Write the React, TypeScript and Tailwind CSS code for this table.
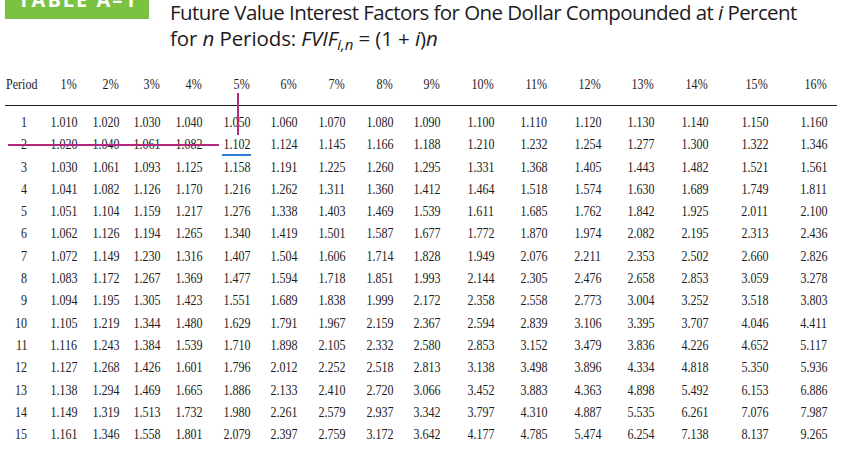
const rows: string[][] = [
  ["1.010", "1.020", "1.030", "1.040", "1.050", "1.060", "1.070", "1.080", "1.090", "1.100", "1.110", "1.120", "1.130", "1.140", "1.150", "1.160"],
  ["1.020", "1.040", "1.061", "1.082", "1.102", "1.124", "1.145", "1.166", "1.188", "1.210", "1.232", "1.254", "1.277", "1.300", "1.322", "1.346"],
  ["1.030", "1.061", "1.093", "1.125", "1.158", "1.191", "1.225", "1.260", "1.295", "1.331", "1.368", "1.405", "1.443", "1.482", "1.521", "1.561"],
  ["1.041", "1.082", "1.126", "1.170", "1.216", "1.262", "1.311", "1.360", "1.412", "1.464", "1.518", "1.574", "1.630", "1.689", "1.749", "1.811"],
  ["1.051", "1.104", "1.159", "1.217", "1.276", "1.338", "1.403", "1.469", "1.539", "1.611", "1.685", "1.762", "1.842", "1.925", "2.011", "2.100"],
  ["1.062", "1.126", "1.194", "1.265", "1.340", "1.419", "1.501", "1.587", "1.677", "1.772", "1.870", "1.974", "2.082", "2.195", "2.313", "2.436"],
  ["1.072", "1.149", "1.230", "1.316", "1.407", "1.504", "1.606", "1.714", "1.828", "1.949", "2.076", "2.211", "2.353", "2.502", "2.660", "2.826"],
  ["1.083", "1.172", "1.267", "1.369", "1.477", "1.594", "1.718", "1.851", "1.993", "2.144", "2.305", "2.476", "2.658", "2.853", "3.059", "3.278"],
  ["1.094", "1.195", "1.305", "1.423", "1.551", "1.689", "1.838", "1.999", "2.172", "2.358", "2.558", "2.773", "3.004", "3.252", "3.518", "3.803"],
  ["1.105", "1.219", "1.344", "1.480", "1.629", "1.791", "1.967", "2.159", "2.367", "2.594", "2.839", "3.106", "3.395", "3.707", "4.046", "4.411"],
  ["1.116", "1.243", "1.384", "1.539", "1.710", "1.898", "2.105", "2.332", "2.580", "2.853", "3.152", "3.479", "3.836", "4.226", "4.652", "5.117"],
  ["1.127", "1.268", "1.426", "1.601", "1.796", "2.012", "2.252", "2.518", "2.813", "3.138", "3.498", "3.896", "4.334", "4.818", "5.350", "5.936"],
  ["1.138", "1.294", "1.469", "1.665", "1.886", "2.133", "2.410", "2.720", "3.066", "3.452", "3.883", "4.363", "4.898", "5.492", "6.153", "6.886"],
  ["1.149", "1.319", "1.513", "1.732", "1.980", "2.261", "2.579", "2.937", "3.342", "3.797", "4.310", "4.887", "5.535", "6.261", "7.076", "7.987"],
  ["1.161", "1.346", "1.558", "1.801", "2.079", "2.397", "2.759", "3.172", "3.642", "4.177", "4.785", "5.474", "6.254", "7.138", "8.137", "9.265"],
];

const rates = Array.from({ length: 16 }, (_, i) => `${i + 1}%`);

// column widths measured from the right edge of each column of numbers
const gridCols =
  "grid grid-cols-[41px_36px_42px_41px_42px_48px_47px_48px_48px_47px_54px_53px_54px_53px_54px_60px_59px]";

function Num({ children }: { children: React.ReactNode }) {
  return (
    <div className="text-right">
      <span className="inline-block origin-right scale-x-[0.86]">{children}</span>
    </div>
  );
}

export default function App() {
  return (
    <div className="relative w-[856px] h-[449px] overflow-hidden bg-white text-[#1e1b1c]">
      {/* heading */}
      <div className="flex h-[74px] items-start">
        <div className="ml-[5px] w-[144px] h-[19px] shrink-0 overflow-hidden bg-[#7cc242]">
          <div className="mt-[-10.5px] pl-[13px] font-['Open_Sans',sans-serif] text-[20px] leading-none font-bold tracking-[0.1em] text-white whitespace-nowrap">
            TABLE A–1
          </div>
        </div>
        <div className="ml-[21px] mt-[-1px] font-['Open_Sans',sans-serif] text-[20.5px] leading-[26px] whitespace-nowrap">
          <div className="tracking-[-0.028em]">
            Future Value Interest Factors for One Dollar Compounded at <i>i</i> Percent
          </div>
          <div className="tracking-[-0.005em]">
            for <i>n</i> Periods: <i>FVIF</i>
            <sub className="text-[15px] italic">i,n</sub> = (1 + <i>i</i>)<i>n</i>
          </div>
        </div>
      </div>

      {/* table */}
      <div className="font-['Liberation_Serif','Times_New_Roman',serif] text-[14px]">
        <div className={`${gridCols} h-[22.4px] leading-[22.4px]`}>
          <div className="pl-[6px]">
            <span className="inline-block origin-left scale-x-[0.86]">Period</span>
          </div>
          {rates.map((r) => (
            <Num key={r}>{r}</Num>
          ))}
        </div>
        <div className="mt-[8.6px] ml-[5px] w-[832px] h-px bg-[#1e1b1c]" />
        <div className="mt-[6px]">
          {rows.map((row, i) => (
            <div key={i} className={`${gridCols} h-[22.3px] leading-[22.3px]`}>
              <div className="pr-[14px] text-right">
                <span className="inline-block origin-right scale-x-[0.86]">{i + 1}</span>
              </div>
              {row.map((v, j) => (
                <Num key={j}>{v}</Num>
              ))}
            </div>
          ))}
        </div>
      </div>

      {/* pen marks drawn over the table */}
      <div className="absolute left-[237px] top-[93px] w-[2px] h-[42px] bg-[#b4297d]" />
      <div className="absolute left-[8px] top-[144px] w-[211px] h-[2px] bg-[#b4297d]" />
      <div className="absolute left-[222px] top-[154px] w-[29px] h-[2px] bg-[#2f7fd1]" />
    </div>
  );
}
